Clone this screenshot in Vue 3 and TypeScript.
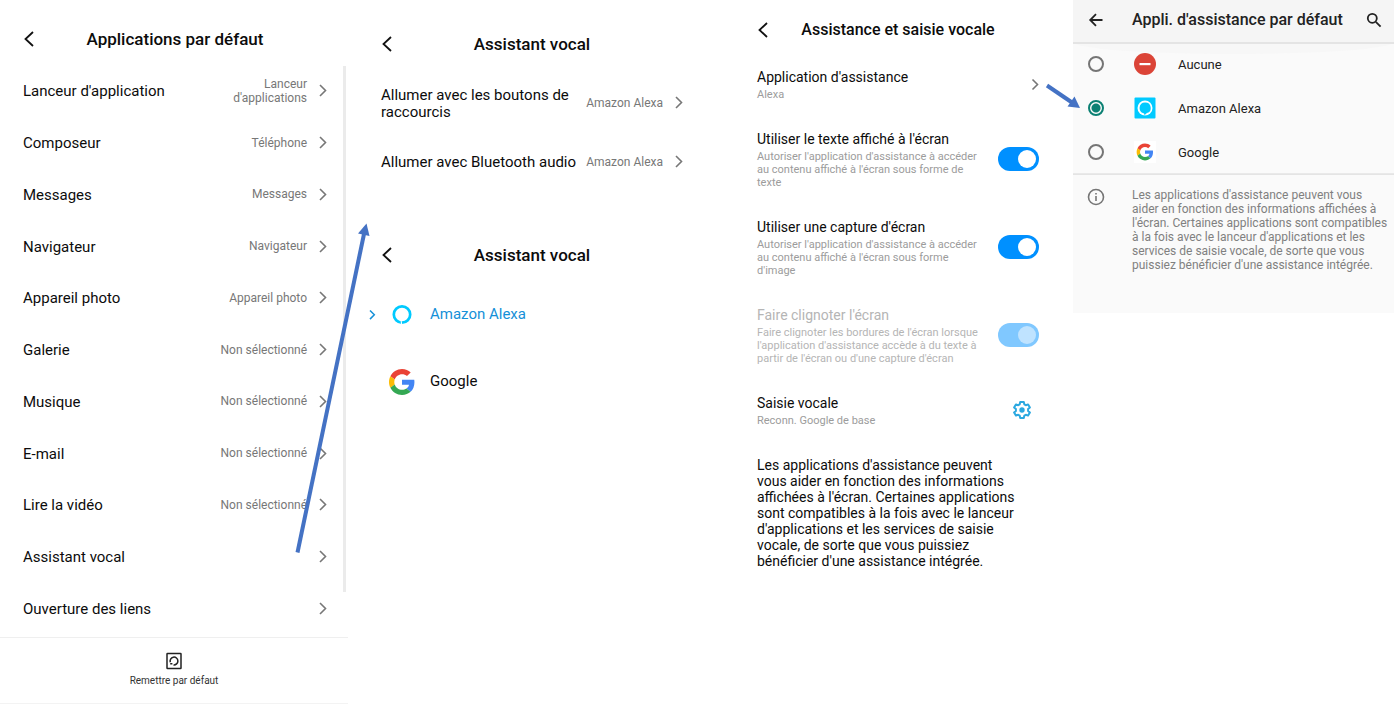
<script setup lang="ts">
import { ref } from 'vue'

interface DefaultApp {
  label: string
  value?: string
}

interface Setting {
  id: string
  label: string
  detail: string
  on: boolean
  disabled?: boolean
}

const defaultApps: DefaultApp[] = [
  { label: "Lanceur d'application", value: "Lanceur d'applications" },
  { label: 'Composeur', value: 'Téléphone' },
  { label: 'Messages', value: 'Messages' },
  { label: 'Navigateur', value: 'Navigateur' },
  { label: 'Appareil photo', value: 'Appareil photo' },
  { label: 'Galerie', value: 'Non sélectionné' },
  { label: 'Musique', value: 'Non sélectionné' },
  { label: 'E-mail', value: 'Non sélectionné' },
  { label: 'Lire la vidéo', value: 'Non sélectionné' },
  { label: 'Assistant vocal' },
  { label: 'Ouverture des liens' },
]

const triggers: DefaultApp[] = [
  { label: 'Allumer avec les boutons de raccourcis', value: 'Amazon Alexa' },
  { label: 'Allumer avec Bluetooth audio', value: 'Amazon Alexa' },
]

const settings = ref<Setting[]>([
  {
    id: 'texte',
    label: "Utiliser le texte affiché à l'écran",
    detail: "Autoriser l'application d'assistance à accéder au contenu affiché à l'écran sous forme de texte",
    on: true,
  },
  {
    id: 'capture',
    label: "Utiliser une capture d'écran",
    detail: "Autoriser l'application d'assistance à accéder au contenu affiché à l'écran sous forme d'image",
    on: true,
  },
  {
    id: 'clignoter',
    label: "Faire clignoter l'écran",
    detail:
      "Faire clignoter les bordures de l'écran lorsque l'application d'assistance accède à du texte à partir de l'écran ou d'une capture d'écran",
    on: true,
    disabled: true,
  },
])

const assistants = ['Aucune', 'Amazon Alexa', 'Google']
const assistant = ref('Amazon Alexa')
const vocal = ref('Amazon Alexa')
</script>

<template>
  <main class="board">
    <section class="panel apps">
      <header class="head">
        <button class="back" type="button" aria-label="Retour">
          <svg width="12" height="18" viewBox="0 0 12 18"><path d="M10 2 2.500 9l7.500 7" /></svg>
        </button>
        <h1>Applications par défaut</h1>
      </header>
      <div class="app-list">
        <button v-for="app in defaultApps" :key="app.label" class="row" type="button">
          <span class="label">{{ app.label }}</span>
          <span class="value">{{ app.value }}</span>
          <svg class="chevron" width="8" height="13" viewBox="0 0 8 13"><path d="m1 1 5.500 5.500L1 12" /></svg>
        </button>
        <div class="scrollbar"></div>
      </div>
      <footer>
        <button class="reset" type="button">
          <svg width="16" height="18" viewBox="0 0 16 18">
            <rect x="1" y="1.500" width="14" height="15" rx="0.500" />
            <path d="M4.300 10.300A3.900 3.900 0 1 1 7.500 12.900M4.200 11.700h2.200" />
          </svg>
          <span>Remettre par défaut</span>
        </button>
      </footer>
    </section>

    <div class="panel vocal">
      <section>
        <header class="head">
          <button class="back" type="button" aria-label="Retour">
            <svg width="12" height="18" viewBox="0 0 12 18"><path d="M10 2 2.500 9l7.500 7" /></svg>
          </button>
          <h2>Assistant vocal</h2>
        </header>
        <div class="trigger-list">
          <button v-for="t in triggers" :key="t.label" class="row" type="button">
            <span class="label">{{ t.label }}</span>
            <span class="value">{{ t.value }}</span>
            <svg class="chevron" width="8" height="13" viewBox="0 0 8 13"><path d="m1 1 5.500 5.500L1 12" /></svg>
          </button>
        </div>
      </section>

      <section class="choice">
        <header class="head">
          <button class="back" type="button" aria-label="Retour">
            <svg width="12" height="18" viewBox="0 0 12 18"><path d="M10 2 2.500 9l7.500 7" /></svg>
          </button>
          <h2>Assistant vocal</h2>
        </header>
        <div class="choice-list">
          <button
            v-for="name in ['Amazon Alexa', 'Google']"
            :key="name"
            type="button"
            :class="{ chosen: vocal === name }"
            @click="vocal = name"
          >
            <span class="mark">
              <svg v-if="vocal === name" width="7" height="10" viewBox="0 0 7 10"><path d="m1 .500 4.300 4.300L1 9.100" /></svg>
            </span>
            <svg v-if="name === 'Google'" width="26" height="26" viewBox="0 0 48 48">
              <path fill="#ea4335" d="M24 9.500c3.540 0 6.710 1.220 9.210 3.600l6.850-6.850C35.900 2.380 30.470 0 24 0 14.620 0 6.510 5.380 2.560 13.220l7.980 6.190C12.430 13.720 17.740 9.500 24 9.500z" />
              <path fill="#4285f4" d="M46.980 24.550c0-1.570-.15-3.090-.38-4.550H24v9.020h12.940c-.58 2.960-2.260 5.480-4.780 7.180l7.730 6c4.510-4.180 7.090-10.360 7.090-17.650z" />
              <path fill="#fbbc05" d="M10.530 28.590c-.48-1.450-.76-2.990-.76-4.590s.27-3.140.76-4.590l-7.980-6.190C.92 16.460 0 20.120 0 24s.92 7.540 2.560 10.780z" />
              <path fill="#34a853" d="M24 48c6.480 0 11.930-2.130 15.890-5.810l-7.730-6c-2.150 1.450-4.920 2.300-8.160 2.300-6.260 0-11.570-4.220-13.470-9.910l-7.980 6.190C6.510 42.620 14.620 48 24 48z" />
            </svg>
            <svg v-else width="26" height="26" viewBox="0 0 26 26">
              <circle cx="13" cy="12.500" r="8.200" fill="none" stroke="#00caff" stroke-width="2.700" />
              <path d="M12.100 18.800 12.700 22.500" fill="none" stroke="#fff" stroke-width="1.100" />
            </svg>
            <span class="label">{{ name }}</span>
          </button>
        </div>
      </section>
    </div>

    <section class="panel voice">
      <header class="head">
        <button class="back" type="button" aria-label="Retour">
          <svg width="12" height="18" viewBox="0 0 12 18"><path d="M10 2 2.500 9l7.500 7" /></svg>
        </button>
        <h2>Assistance et saisie vocale</h2>
      </header>
      <div class="settings">
        <button class="setting" type="button">
          <span class="copy">
            <span class="name">Application d'assistance</span>
            <span class="detail">Alexa</span>
          </span>
          <svg class="chevron" width="8" height="13" viewBox="0 0 8 13"><path d="m1.500 1.500 5 5-5 5" /></svg>
        </button>
        <label v-for="s in settings" :key="s.id" class="setting" :class="{ off: s.disabled }" :for="s.id">
          <span class="copy">
            <span class="name">{{ s.label }}</span>
            <span class="detail">{{ s.detail }}</span>
          </span>
          <input :id="s.id" v-model="s.on" class="switch" type="checkbox" role="switch" :disabled="s.disabled" />
        </label>
        <div class="setting">
          <span class="copy">
            <span class="name">Saisie vocale</span>
            <span class="detail">Reconn. Google de base</span>
          </span>
          <button class="gear" type="button" aria-label="Paramètres de saisie vocale">
            <svg width="20" height="20" viewBox="0 0 20 20">
              <path d="M8.200 2h3.600l.5 2.300 1.500.9 2.300-.8 1.800 3.100-1.800 1.600v1.800l1.800 1.600-1.800 3.100-2.300-.8-1.500.9-.5 2.300H8.200l-.5-2.300-1.500-.9-2.300.8-1.800-3.100 1.800-1.600V9.100L2.100 7.500l1.800-3.100 2.300.8 1.500-.9z" />
              <circle cx="10" cy="10" r="2.700" />
            </svg>
          </button>
        </div>
      </div>
      <p class="note">
        Les applications d'assistance peuvent vous aider en fonction des informations affichées à l'écran. Certaines
        applications sont compatibles à la fois avec le lanceur d'applications et les services de saisie vocale, de
        sorte que vous puissiez bénéficier d'une assistance intégrée.
      </p>
    </section>

    <section class="assist">
      <header class="bar">
        <button type="button" aria-label="Retour">
          <svg width="18" height="18" viewBox="0 0 18 18"><path d="M15.500 9H3.500M9 3.200 3.200 9 9 14.800" /></svg>
        </button>
        <h2>Appli. d'assistance par défaut</h2>
        <button type="button" aria-label="Rechercher">
          <svg width="16" height="16" viewBox="0 0 16 16"><circle cx="6.300" cy="6.300" r="4.500" /><path d="m9.800 9.800 4.800 4.800" /></svg>
        </button>
      </header>
      <div class="options" role="radiogroup" aria-label="Appli. d'assistance par défaut">
        <label v-for="name in assistants" :key="name" class="option">
          <input v-model="assistant" type="radio" name="assistant" :value="name" />
          <svg v-if="name === 'Aucune'" width="22" height="22" viewBox="0 0 22 22">
            <circle cx="11" cy="11" r="11" fill="#db4437" />
            <path d="M5.500 10h11v2.200h-11z" fill="#fff" />
          </svg>
          <svg v-else-if="name === 'Amazon Alexa'" width="22" height="22" viewBox="0 0 22 22">
            <rect x="0.500" y="0.500" width="21" height="21" rx="1" fill="#00caff" />
            <circle cx="11" cy="11" r="7.500" fill="#fff" />
            <path d="M11 5.400A5.500 5.500 0 0 0 9.600 16.200Q10.600 16.500 10.600 18.500Q11.500 17 13 16.100A5.500 5.500 0 0 0 11 5.400z" fill="#00caff" />
          </svg>
          <svg v-else width="22" height="22" viewBox="-16 -16 80 80">
            <path fill="#fff" d="M-16-16h80v80h-80z" />
            <g transform="translate(-6.500 -6.500) scale(1.270)">
              <path fill="#ea4335" d="M24 9.500c3.540 0 6.710 1.220 9.210 3.600l6.850-6.850C35.900 2.380 30.470 0 24 0 14.620 0 6.510 5.380 2.560 13.220l7.980 6.190C12.430 13.720 17.740 9.500 24 9.500z" />
              <path fill="#4285f4" d="M46.980 24.550c0-1.570-.15-3.090-.38-4.550H24v9.020h12.940c-.58 2.960-2.260 5.480-4.780 7.180l7.730 6c4.510-4.180 7.090-10.360 7.090-17.650z" />
              <path fill="#fbbc05" d="M10.530 28.590c-.48-1.450-.76-2.990-.76-4.590s.27-3.140.76-4.590l-7.980-6.190C.92 16.460 0 20.120 0 24s.92 7.540 2.560 10.780z" />
              <path fill="#34a853" d="M24 48c6.480 0 11.930-2.130 15.890-5.810l-7.730-6c-2.150 1.450-4.920 2.300-8.160 2.300-6.260 0-11.570-4.220-13.470-9.910l-7.980 6.190C6.510 42.620 14.620 48 24 48z" />
            </g>
          </svg>
          <span>{{ name }}</span>
        </label>
      </div>
      <div class="info">
        <svg width="18" height="18" viewBox="0 0 18 18">
          <circle cx="9" cy="9" r="7.500" />
          <path d="M9 8v5M9 5v1.600" />
        </svg>
        <p>
          Les applications d'assistance peuvent vous aider en fonction des informations affichées à l'écran. Certaines
          applications sont compatibles à la fois avec le lanceur d'applications et les services de saisie vocale, de
          sorte que vous puissiez bénéficier d'une assistance intégrée.
        </p>
      </div>
    </section>

    <svg class="arrows" viewBox="0 0 1394 704" aria-hidden="true">
      <path class="shaft" d="M297.500 552.500 364 234" />
      <path class="tip" d="M366.500 223.500 369.500 236 358 233.500z" />
      <path class="shaft" d="M1047 85.500 1072 102.500" />
      <path class="tip" d="M1080 108 1067.500 106.500 1074.500 96.500z" />
    </svg>
  </main>
</template>

<style>
body {
  background: #fff;
}
</style>

<style scoped>
.board {
  position: relative;
  display: grid;
  grid-template-columns: 348fr 372fr 353fr 321fr;
  min-height: 100vh;
  font-family: Roboto, 'Liberation Sans', sans-serif;
  color: #0c0c0c;
}

button {
  margin: 0;
  padding: 0;
  border: 0;
  background: none;
  font: inherit;
  color: inherit;
  text-align: left;
  cursor: pointer;
}

svg {
  display: block;
  flex: none;
}

h1,
h2 {
  margin: 0;
  font-size: 17px;
  font-weight: 500;
  line-height: 24px;
  white-space: nowrap;
}

.voice h2,
.bar h2 {
  font-size: 16px;
}

.head {
  display: grid;
  grid-template-columns: 12px 1fr 12px;
  align-items: center;
  height: 52px;
  text-align: center;
}

.back path {
  fill: none;
  stroke: #111;
  stroke-width: 1.8;
}

.row {
  display: flex;
  align-items: center;
  width: 100%;
}

.label {
  flex: 1;
  font-size: 15px;
  line-height: 17px;
}

.row .label {
  padding-top: 2px;
}

.value {
  margin: 0 12px;
  font-size: 12px;
  line-height: 14px;
  color: #777;
  text-align: right;
}

.chevron path {
  fill: none;
  stroke: #777;
  stroke-width: 1.6;
}

.apps {
  display: flex;
  flex-direction: column;
}

.apps .head {
  margin: 13px 21px 0 23px;
}

.app-list {
  position: relative;
  display: flex;
  flex: 1;
  flex-direction: column;
  padding: 0 21px 3px 23px;
}

.app-list .row {
  flex: 1;
}

.app-list .value {
  max-width: 96px;
}

.scrollbar {
  position: absolute;
  top: 1px;
  right: 2px;
  bottom: 45px;
  width: 3px;
  background: #ebebeb;
}

footer {
  display: flex;
  justify-content: center;
  height: 65px;
  border-top: 1px solid #efefef;
  border-bottom: 1px solid #f3f3f3;
}

.reset {
  display: flex;
  flex-direction: column;
  align-items: center;
  justify-content: center;
  gap: 4px;
  padding-bottom: 2px;
  font-size: 10px;
  line-height: 14px;
  color: #333;
}

.reset rect,
.reset path {
  fill: none;
  stroke: #222;
  stroke-width: 1.5;
}

.vocal {
  padding: 18px 37px 0 33px;
}

.trigger-list {
  padding-top: 3px;
}

.trigger-list .row {
  height: 59px;
}

.trigger-list .value {
  margin-left: 8px;
  white-space: nowrap;
}

.choice {
  margin-top: 38px;
}

.choice-list {
  margin-left: -12px;
}

.choice-list button {
  display: flex;
  align-items: center;
  width: 100%;
  height: 67px;
}

.choice-list .label {
  margin-left: 15px;
}

.mark {
  width: 7px;
  margin-right: 13px;
}

.mark path {
  fill: none;
  stroke: #1590d8;
  stroke-width: 1.5;
}

.chosen .label {
  color: #1590d8;
}

.voice {
  padding: 4px 34px 0 37px;
}

.settings {
  display: flex;
  flex-direction: column;
  gap: 28px;
  padding-top: 11px;
}

.setting {
  display: flex;
  align-items: center;
  gap: 16px;
}

.copy {
  flex: 1;
}

.name,
.detail {
  display: block;
}

.name {
  font-size: 14px;
  line-height: 21px;
}

.detail {
  font-size: 11px;
  line-height: 13px;
  color: #9c9c9c;
}

.off .name,
.off .detail {
  color: #b5b5b5;
}

.switch {
  flex: none;
  appearance: none;
  display: flex;
  align-items: center;
  width: 41px;
  height: 24px;
  margin: 0;
  padding: 0 3px;
  border-radius: 12px;
  background: #c4c4c4;
}

.switch::before {
  content: '';
  width: 18px;
  height: 18px;
  border-radius: 50%;
  background: #fff;
}

.switch:checked {
  justify-content: flex-end;
  background: #0090ff;
}

.switch:disabled {
  background: #80c8ff;
}

.switch:disabled::before {
  background: #bfe3ff;
}

.gear {
  margin-right: 7px;
}

.gear path {
  fill: none;
  stroke: #2ba8e0;
  stroke-width: 2;
  stroke-linejoin: round;
}

.gear circle {
  fill: #2ba8e0;
}

.note {
  margin: 30px 24px 0 0;
  font-size: 14px;
  line-height: 16px;
}

.assist {
  align-self: start;
  padding-bottom: 41px;
  background: #fafafa;
  color: #222;
}

.bar {
  position: relative;
  display: flex;
  align-items: center;
  height: 40px;
  padding: 0 12px 2px 14px;
  box-shadow: 0 2px 0 #e4e4e4;
  background: #f5f5f5;
  z-index: 1;
}

.bar h2 {
  flex: 1;
  margin-left: 27px;
}

.bar path,
.bar circle {
  fill: none;
  stroke: #222;
  stroke-width: 1.8;
}

.options {
  position: relative;
  border-bottom: 1px solid #e4e4e4;
  box-shadow: inset 0 -1px 0 #e9e9e9;
  padding: 0 0 0 15px;
}

.options::before {
  content: '';
  position: absolute;
  top: 0;
  left: 0;
  right: 0;
  height: 12px;
  border-radius: 0 0 50% 50% / 0 0 100% 100%;
  background: #f7f7f7;
}

.option {
  position: relative;
  display: flex;
  align-items: center;
  height: 44px;
  font-size: 13px;
}

.option input {
  appearance: none;
  width: 16px;
  height: 16px;
  margin: 0 30px 0 0;
  border: 2px solid #757575;
  border-radius: 50%;
}

.option input:checked {
  border-color: #0b8073;
  background: radial-gradient(circle, #0b8073 4px, transparent 5px);
}

.option span {
  margin-left: 22px;
}

.info {
  display: flex;
  gap: 27px;
  padding: 13px 4px 0 14px;
}

.info circle,
.info path {
  fill: none;
  stroke: #757575;
  stroke-width: 1.6;
}

.info p {
  margin: 0;
  font-size: 12px;
  line-height: 14px;
  color: #808080;
}

.arrows {
  position: absolute;
  top: 0;
  left: 0;
  width: 100%;
  pointer-events: none;
}

.shaft {
  fill: none;
  stroke: #4472c4;
  stroke-width: 4;
}

.tip {
  fill: #4472c4;
}
</style>
